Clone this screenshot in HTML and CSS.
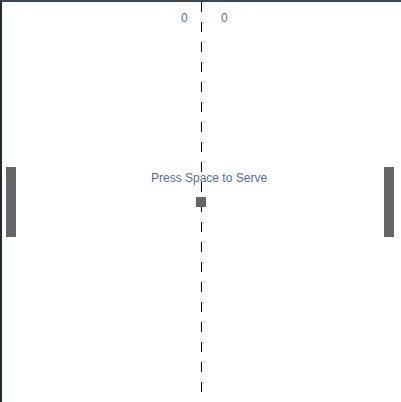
FILE: index.html
```html
<!DOCTYPE html>
<html>
<head>
<meta charset="utf-8">
<link rel="stylesheet" href="styles.css">
</head>
<body>
<div class="board">
  <div class="net"></div>
  <div class="score score-left">0</div>
  <div class="score score-right">0</div>
  <div class="paddle paddle-left"></div>
  <div class="paddle paddle-right"></div>
  <div class="message">Press Space to Serve</div>
  <div class="ball"></div>
</div>
</body>
</html>
```
FILE: styles.css
```css
html, body {
  margin: 0;
  padding: 0;
  background: #ffffff;
}
body {
  width: 401px;
  height: 402px;
  overflow: hidden;
}
.board {
  position: relative;
  box-sizing: border-box;
  width: 401px;
  height: 402px;
  border-top: 2px solid #3b4752;
  border-left: 2px solid #1d2c39;
  background: #ffffff;
  font-family: "Liberation Sans", Arial, sans-serif;
}
.net {
  position: absolute;
  left: 199px;
  top: 0;
  width: 1px;
  height: 400px;
  background: repeating-linear-gradient(to bottom, #000 0, #000 10px, transparent 10px, transparent 20px);
}
.score {
  position: absolute;
  top: 9px;
  font-size: 12px;
  line-height: 14px;
  color: #4f6e99;
}
.score-left { left: 179px; }
.score-right { left: 219px; }
.paddle {
  position: absolute;
  top: 165px;
  width: 10px;
  height: 70px;
  background: #666666;
}
.paddle-left { left: 4px; }
.paddle-right { left: 382px; }
.message {
  position: absolute;
  left: 149px;
  top: 169px;
  font-size: 12px;
  line-height: 14px;
  color: #4f6e99;
  white-space: nowrap;
}
.ball {
  position: absolute;
  left: 194px;
  top: 195px;
  width: 10px;
  height: 10px;
  background: #666666;
}
```
